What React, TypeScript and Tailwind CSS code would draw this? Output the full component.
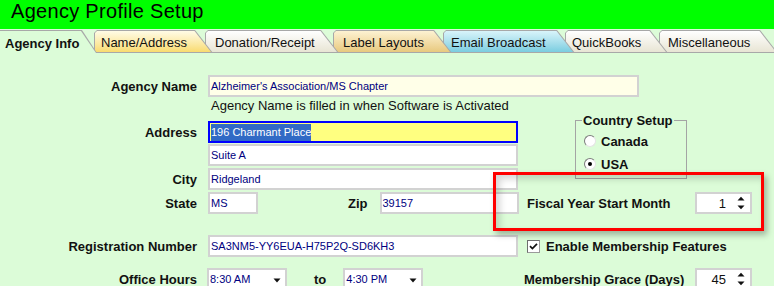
import React from "react";

type TabDef = { label: string; cls: string; bg: string; pl: string };

const TABS: TabDef[] = [
  { label: "Name/Address", cls: "w-[119px] -ml-[3px] z-[6]", bg: "bg-linear-to-b from-[#fffce6] to-[#f9db6e]", pl: "pl-[6px]" },
  { label: "Donation/Receipt", cls: "w-[134px] -ml-[8px] z-[5]", bg: "bg-linear-to-b from-[#ffffff] to-[#e8e5d4]", pl: "pl-[9px]" },
  { label: "Label Layouts", cls: "w-[119px] -ml-[6px] z-[4]", bg: "bg-linear-to-b from-[#fdf2d2] to-[#e8c97e]", pl: "pl-[9px]" },
  { label: "Email Broadcast", cls: "w-[132px] -ml-[9px] z-[3]", bg: "bg-linear-to-b from-[#d8f4fa] to-[#7acde0]", pl: "pl-[7px]" },
  { label: "QuickBooks", cls: "w-[103px] -ml-[10px] z-[2]", bg: "bg-linear-to-b from-[#ffffff] to-[#e8e5d4]", pl: "pl-[6px]" },
  { label: "Miscellaneous", cls: "w-[119px] -ml-[9px] z-[1]", bg: "bg-linear-to-b from-[#ffffff] to-[#e8e5d4]", pl: "pl-[8px]" },
];

function Label({ children }: { children: React.ReactNode }) {
  return (
    <div className="w-[197px] shrink-0 text-right font-bold text-[13px] leading-[15px] text-[#111]">
      {children}
    </div>
  );
}

function Input({ value, w, cls = "" }: { value: string; w: string; cls?: string }) {
  return (
    <div
      className={`${w} ${cls} h-[22px] shrink-0 border-2 border-[#d2d2d2] bg-white flex items-center pl-px text-[11px] leading-[13px] text-[#000080] whitespace-nowrap overflow-hidden`}
    >
      {value}
    </div>
  );
}

function Arrows() {
  return (
    <svg width="8" height="14" viewBox="0 0 8 14" className="shrink-0">
      <polygon points="0.5,4.5 7.5,4.5 4,0.8" fill="#111" />
      <polygon points="0.5,9.5 7.5,9.5 4,13.2" fill="#111" />
    </svg>
  );
}

function Spinner({ value }: { value: string }) {
  return (
    <div className="w-[57px] h-[22px] shrink-0 border-2 border-[#d2d2d2] bg-white flex items-center justify-end text-[13px] leading-[15px] text-[#111]">
      <span>{value}</span>
      <span className="ml-[11px] mr-[5px] flex">
        <Arrows />
      </span>
    </div>
  );
}

function Dropdown({ value }: { value: string }) {
  return (
    <div className="w-[80px] h-[22px] shrink-0 border-2 border-[#d2d2d2] bg-white flex items-center pl-px text-[11px] leading-[13px] text-[#000080]">
      <span>{value}</span>
      <svg width="8" height="5" viewBox="0 0 8 5" className="ml-auto mr-[4px] mt-[2px]">
        <polygon points="0.5,0.5 7.5,0.5 4,4.5" fill="#111" />
      </svg>
    </div>
  );
}

function Radio({ checked }: { checked?: boolean }) {
  return (
    <span className="w-[12px] h-[12px] shrink-0 rounded-full bg-white border border-t-[#7c7c7c] border-l-[#7c7c7c] border-r-[#e4e4e4] border-b-[#e4e4e4] flex items-center justify-center">
      {checked ? <span className="w-[4px] h-[4px] rounded-full bg-black" /> : null}
    </span>
  );
}

export default function App() {
  return (
    <div className="w-[774px] h-[286px] overflow-hidden relative bg-[#dcfcd8] font-['Liberation_Sans',Arial,sans-serif] text-black">
      {/* Title bar */}
      <div className="h-[29px] bg-[#00ff00] pl-[11px] text-[20px] leading-[22px] tracking-[0.3px] text-black">
        Agency Profile Setup
      </div>

      {/* Tabs */}
      <div className="h-[24px] pt-px flex overflow-hidden">
        <div className="relative z-[7] w-[97px] h-[23px] shrink-0 bg-[#a8a8a8] pt-px [clip-path:polygon(0_0,calc(100%_-_15px)_0,100%_100%,0_100%)]">
          <div className="h-full bg-[#dcfcd8] flex items-center pl-[5px] pt-[2px] font-bold text-[13px] leading-[15px] text-[#111] [clip-path:polygon(0_0,calc(100%_-_16px)_0,calc(100%_-_1px)_100%,0_100%)]">
            Agency Info
          </div>
        </div>
        {TABS.map((t) => (
          <div
            key={t.label}
            className={`relative ${t.cls} h-[23px] shrink-0 bg-[#a8a8a8] pt-px pl-px pb-px [clip-path:polygon(0_3px,3px_0,calc(100%_-_18px)_0,100%_100%,0_100%)]`}
          >
            <div
              className={`h-full ${t.bg} ${t.pl} flex items-center pt-[2px] text-[13px] leading-[15px] text-[#111] whitespace-nowrap [clip-path:polygon(0_2px,2px_0,calc(100%_-_18.5px)_0,calc(100%_-_2px)_100%,0_100%)]`}
            >
              {t.label}
            </div>
          </div>
        ))}
      </div>

      {/* Body */}
      <div className="pt-[22px]">
        <div className="flex items-center h-[22px]">
          <Label>Agency Name</Label>
          <div className="ml-[11px] w-[431px] h-[22px] border-2 border-[#d2d2d2] bg-[#ffffe8] flex items-center pl-px text-[11px] leading-[13px] text-[#000080]">
            Alzheimer's Association/MS Chapter
          </div>
        </div>
        <div className="h-[24px] pl-[211px] text-[13px] leading-[18px] text-[#111]">
          Agency Name is filled in when Software is Activated
        </div>

        <div className="flex">
          {/* Left column */}
          <div className="w-[517px] shrink-0">
            <div className="flex items-center h-[22px]">
              <Label>Address</Label>
              <div className="ml-[11px] w-[310px] h-[22px] shrink-0 border-2 border-[#0000ff] bg-[#ffff80] flex items-center pl-px text-[11px]">
                <span className="bg-[#316ac5] text-white leading-[17px]">196 Charmant Place</span>
              </div>
            </div>
            <div className="mt-px pl-[208px] flex">
              <Input value="Suite A" w="w-[310px]" />
            </div>
            <div className="mt-[2px] flex items-center h-[22px]">
              <Label>City</Label>
              <Input value="Ridgeland" w="w-[310px]" cls="ml-[11px]" />
            </div>
            <div className="mt-[2px] flex items-center h-[22px]">
              <Label>State</Label>
              <Input value="MS" w="w-[50px]" cls="ml-[11px]" />
              <div className="ml-[90px] font-bold text-[13px] leading-[15px] text-[#111]">Zip</div>
              <Input value="39157" w="w-[139px]" cls="ml-[12px]" />
            </div>
            <div className="mt-[21px] flex items-center h-[22px]">
              <Label>Registration Number</Label>
              <Input value="SA3NM5-YY6EUA-H75P2Q-SD6KH3" w="w-[310px]" cls="ml-[11px]" />
            </div>
            <div className="mt-[11px] flex items-center h-[22px]">
              <Label>Office Hours</Label>
              <div className="ml-[10px]">
                <Dropdown value="8:30 AM" />
              </div>
              <div className="ml-[27px] font-bold text-[13px] leading-[15px] text-[#111]">to</div>
              <div className="ml-[17px]">
                <Dropdown value="4:30 PM" />
              </div>
            </div>
          </div>

          {/* Right column */}
          <div className="ml-[7px] flex-1">
            <fieldset className="-mt-[8px] ml-[51px] w-[112px] h-[66px] border border-[#a4a4a4]">
              <legend className="ml-[6px] px-px font-bold text-[13px] leading-[15px] text-[#111]">Country Setup</legend>
              <div className="mt-[5px] h-[16px] flex items-center pl-[8px]">
                <Radio />
                <span className="ml-[5px] font-bold text-[13px] leading-[15px] text-[#111]">Canada</span>
              </div>
              <div className="mt-[7px] h-[16px] flex items-center pl-[8px]">
                <Radio checked />
                <span className="ml-[5px] font-bold text-[13px] leading-[15px] text-[#111]">USA</span>
              </div>
            </fieldset>

            <div className="mt-[13px] flex items-center h-[22px]">
              <div className="w-[171px] shrink-0 pl-[3px] font-bold text-[13px] leading-[15px] text-[#111]">
                Fiscal Year Start Month
              </div>
              <Spinner value="1" />
            </div>

            <div className="mt-[21px] flex items-center h-[22px] pl-[3px]">
              <span className="w-[13px] h-[13px] shrink-0 bg-white border border-t-[#6e6e6e] border-l-[#6e6e6e] border-r-[#9a9a9a] border-b-[#9a9a9a] flex items-center justify-center">
                <svg width="9" height="9" viewBox="0 0 9 9">
                  <path d="M1 4.2 L3.4 6.6 L8 1.8" stroke="#111" strokeWidth="1.7" fill="none" />
                </svg>
              </span>
              <span className="ml-[6px] font-bold text-[13px] leading-[15px] text-[#111]">
                Enable Membership Features
              </span>
            </div>

            <div className="mt-[11px] flex items-center h-[22px]">
              <div className="w-[171px] shrink-0 font-bold text-[13px] leading-[15px] text-[#111]">
                Membership Grace (Days)
              </div>
              <Spinner value="45" />
            </div>
          </div>
        </div>
      </div>

      {/* Red annotation rectangle */}
      <div className="absolute left-[493px] top-[172px] w-[271px] h-[59px] border-[3px] border-[#ff0000] pointer-events-none shadow-[3px_4px_6px_rgba(0,0,0,0.28),inset_4px_4px_7px_rgba(0,0,0,0.16)]" />
    </div>
  );
}
